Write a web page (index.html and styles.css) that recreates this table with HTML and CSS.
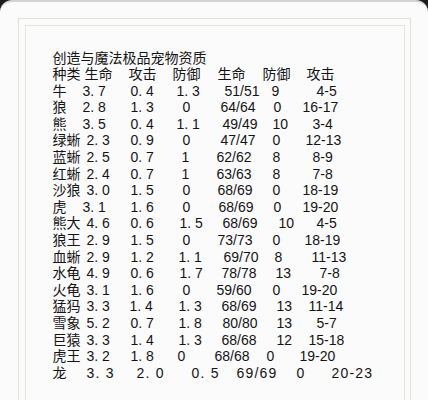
FILE: index.html
```html
<!DOCTYPE html>
<html lang="zh">
<head>
<meta charset="utf-8">
<title>创造与魔法极品宠物资质</title>
<link rel="stylesheet" href="styles.css">
</head>
<body>
<div class="card">
  <div class="frame-outer">
    <div class="frame-inner">
      <div class="title">创造与魔法极品宠物资质</div>
      <div class="row"><span>种类</span><span class="o2">生命</span><span>攻击</span><span>防御</span><span class="o3">生命</span><span>防御</span><span class="o7">攻击</span></div>
      <div class="row"><span>牛</span><span>3. 7</span><span class="o2">0. 4</span><span class="o4">1. 3</span><span class="o10">51/51</span><span class="o9">9</span><span class="o17">4-5</span></div>
      <div class="row"><span>狼</span><span>2. 8</span><span class="o2">1. 3</span><span class="o10">0</span><span class="o6">64/64</span><span class="o11">0</span><span class="o3">16-17</span></div>
      <div class="row"><span>熊</span><span>3. 5</span><span class="o2">0. 4</span><span class="o4">1. 1</span><span class="o8">49/49</span><span class="o10">10</span><span class="o13">3-4</span></div>
      <div class="row"><span>绿蜥</span><span class="o4">2. 3</span><span class="o2">0. 9</span><span class="o10">0</span><span class="o6">47/47</span><span class="o10">0</span><span class="o6">12-13</span></div>
      <div class="row"><span>蓝蜥</span><span class="o4">2. 5</span><span class="o2">0. 7</span><span class="o9">1</span><span class="o2">62/62</span><span class="o10">8</span><span class="o13">8-9</span></div>
      <div class="row"><span>红蜥</span><span class="o4">2. 4</span><span class="o2">0. 7</span><span class="o9">1</span><span class="o2">63/63</span><span class="o10">8</span><span class="o13">7-8</span></div>
      <div class="row"><span>沙狼</span><span class="o4">3. 0</span><span class="o2">1. 5</span><span class="o10">0</span><span class="o3">68/69</span><span class="o10">0</span><span class="o3">18-19</span></div>
      <div class="row"><span>虎</span><span>3. 1</span><span class="o2">1. 6</span><span class="o10">0</span><span class="o4">68/69</span><span class="o11">0</span><span class="o3">19-20</span></div>
      <div class="row"><span>熊大</span><span class="o4">4. 6</span><span class="o2">0. 6</span><span class="o7">1. 5</span><span class="o8">68/69</span><span class="o16">10</span><span class="o17">4-5</span></div>
      <div class="row"><span>狼王</span><span class="o4">2. 9</span><span class="o2">1. 5</span><span class="o10">0</span><span class="o3">73/73</span><span class="o10">0</span><span class="o5">18-19</span></div>
      <div class="row"><span>血蜥</span><span class="o4">2. 9</span><span class="o2">1. 2</span><span class="o6">1. 1</span><span class="o9">69/70</span><span class="o12">8</span><span class="o12">11-13</span></div>
      <div class="row"><span>水龟</span><span class="o4">4. 9</span><span class="o2">0. 6</span><span class="o7">1. 7</span><span class="o7">78/78</span><span class="o13">13</span><span class="o20">7-8</span></div>
      <div class="row"><span>火龟</span><span class="o4">3. 1</span><span class="o2">1. 6</span><span class="o10">0</span><span class="o2">59/60</span><span class="o10">0</span><span class="o2">19-20</span></div>
      <div class="row"><span>猛犸</span><span class="o4">3. 3</span><span class="o1">1. 4</span><span class="o6">1. 3</span><span class="o7">68/69</span><span class="o14">13</span><span class="o9">11-14</span></div>
      <div class="row"><span>雪象</span><span class="o4">5. 2</span><span class="o2">0. 7</span><span class="o6">1. 8</span><span class="o8">80/80</span><span class="o14">13</span><span class="o17">5-7</span></div>
      <div class="row"><span>巨猿</span><span class="o4">3. 3</span><span class="o2">1. 4</span><span class="o6">1. 3</span><span class="o7">68/68</span><span class="o14">12</span><span class="o9">15-18</span></div>
      <div class="row"><span>虎王</span><span class="o4">3. 2</span><span class="o2">1. 8</span><span class="o5">0</span><span>68/68</span><span class="o4">0</span><span>19-20</span></div>
      <div class="row wide"><span>龙</span><span class="o4">3. 3</span><span class="o8">2. 0</span><span class="o19">0. 5</span><span class="o22">69/69</span><span class="o34">0</span><span class="o32">20-23</span></div>
    </div>
  </div>
</div>
</body>
</html>
```
FILE: styles.css
```css
html, body {
  margin: 0;
  padding: 0;
}
body {
  background: #1c1c1c;
  width: 428px;
  height: 400px;
  overflow: hidden;
}
.card {
  box-sizing: border-box;
  height: 400px;
  background: #fcfbfc;
  border-top: 2px solid #d4d4d4;
  border-radius: 12px 12px 0 0;
  padding: 16px 17px 0 18px;
  display: flex;
  flex-direction: column;
}
.frame-outer {
  flex: 1;
  display: flex;
  flex-direction: column;
  border: 1.5px solid #e3e0d8;
  border-bottom: none;
  padding: 5.5px 5.5px 0 5.5px;
}
.frame-inner {
  flex: 1;
  border: 1px solid #e7e4dd;
  border-bottom: none;
  padding: 24px 0 0 27px;
  font-family: "Liberation Sans", "Noto Sans CJK SC", sans-serif;
  font-size: 14px;
  line-height: 16.6px;
  color: #141414;
}
.title {
  white-space: nowrap;
}
.row {
  display: grid;
  grid-template-columns: 30px 46px 44px 42px 48px 37px 1fr;
  white-space: pre;
}
.row span {
  display: block;
}
.wide span + span {
  letter-spacing: 1.2px;
}
.o1 { padding-left: 1px; }
.o2 { padding-left: 2px; }
.o3 { padding-left: 3px; }
.o4 { padding-left: 4px; }
.o5 { padding-left: 5px; }
.o6 { padding-left: 6px; }
.o7 { padding-left: 7px; }
.o8 { padding-left: 8px; }
.o9 { padding-left: 9px; }
.o10 { padding-left: 10px; }
.o11 { padding-left: 11px; }
.o12 { padding-left: 12px; }
.o13 { padding-left: 13px; }
.o14 { padding-left: 14px; }
.o16 { padding-left: 16px; }
.o17 { padding-left: 17px; }
.o19 { padding-left: 19px; }
.o20 { padding-left: 20px; }
.o22 { padding-left: 22px; }
.o32 { padding-left: 32px; }
.o34 { padding-left: 34px; }
```
